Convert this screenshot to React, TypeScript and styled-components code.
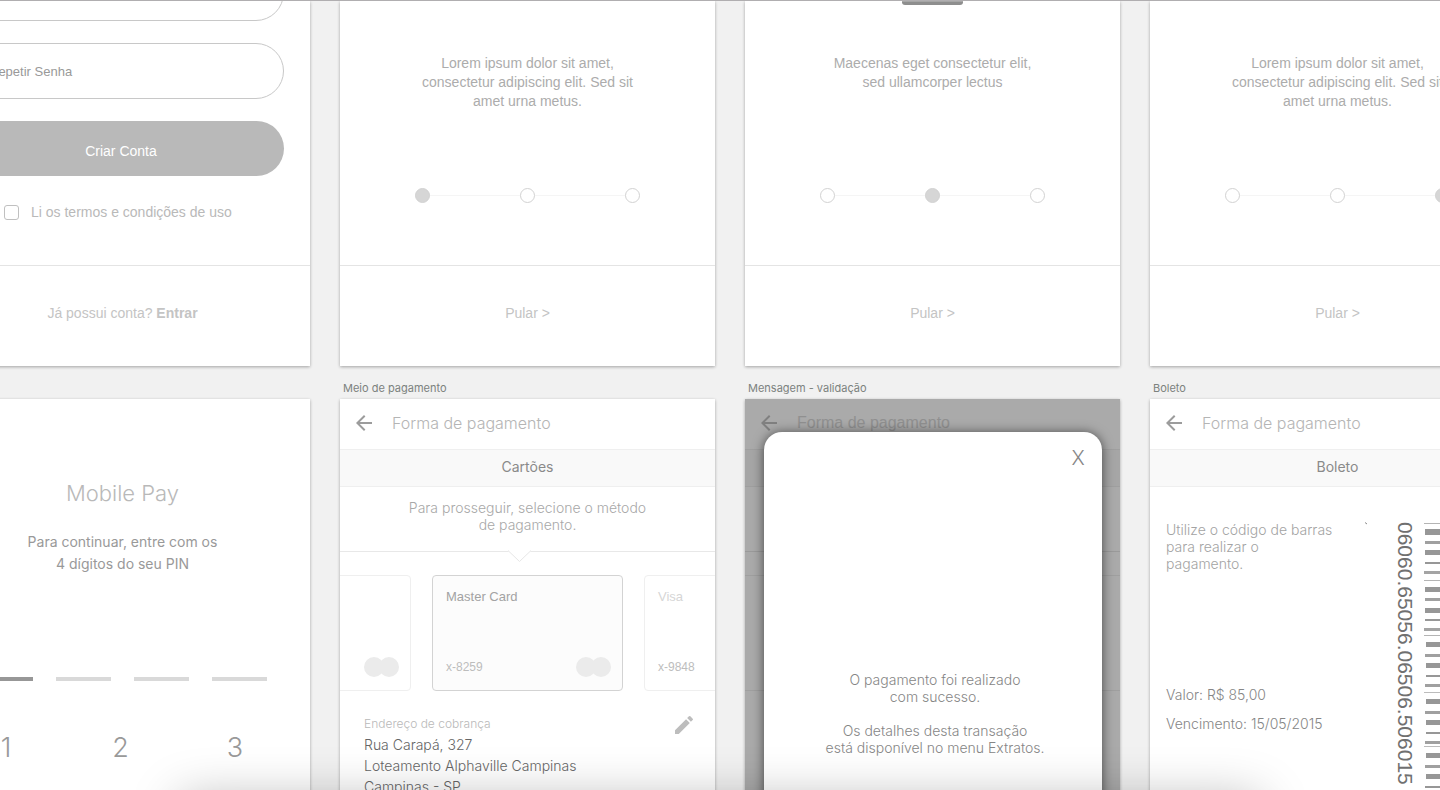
import React from "react";
import styled, { createGlobalStyle } from "styled-components";
import { MdArrowBack, MdEdit } from "react-icons/md";

const helvetica = `"Helvetica Neue", "Liberation Sans", Arial, sans-serif`;
const system = `Inter, "Liberation Sans", sans-serif`;

const GlobalStyle = createGlobalStyle`
  * { box-sizing: border-box; margin: 0; padding: 0; }
  body { background: #f1f1f1; overflow: hidden; font-family: ${system}; }
  button { border: 0; background: none; cursor: pointer; font-family: inherit; }
  a { color: inherit; text-decoration: none; }
  ol { list-style: none; }
`;

const Canvas = styled.main`
  height: 100vh;
  overflow: hidden;
  border-top: 1px solid #b0aeb0;
`;

const BoardRow = styled.div`
  display: flex;
  gap: 30px;
  margin-left: -65px;
  > * { flex: 0 0 375px; }
`;

const Artboard = styled.section<{ $height: number }>`
  position: relative;
  height: ${(p) => p.$height}px;
  overflow: hidden;
  background: #fff;
`;

const BoardSlot = styled.div`
  min-width: 0;
`;

const BoardFrame = styled.div`
  min-width: 0;
  box-shadow: 0 1px 3px rgba(0, 0, 0, 0.32);
`;

const BoardLabel = styled.h2`
  height: 33px;
  padding: 15px 3px 0;
  font: 400 11px/15px Inter, sans-serif;
  color: #7c827e;
`;

/* Sign-up and onboarding screens */

const TopScreen = styled.div`
  display: flex;
  flex-direction: column;
  height: 100%;
  font-family: ${helvetica};
`;

const SignUpForm = styled.form`
  flex: 1;
  display: flex;
  flex-direction: column;
  padding: 0 26px 0 23px;
  margin-top: -36px;
`;

const Field = styled.input`
  flex: none;
  height: 56px;
  margin-bottom: 22px;
  padding: 0 30px;
  border: 1px solid #c8c8c8;
  border-radius: 28px;
  outline: 0;
  background: #fff;
  font: 400 13px/20px ${helvetica};
  color: #999;
  &::placeholder { color: #999; opacity: 1; }
`;

const SubmitButton = styled.button`
  flex: none;
  height: 55px;
  padding-top: 4px;
  border-radius: 28px;
  background: #b9b9b9;
  color: #fff;
  font: 400 14px/20px ${helvetica};
`;

const Terms = styled.label`
  display: flex;
  align-items: center;
  gap: 12px;
  margin-top: 26px;
  padding-left: 46px;
  font-size: 14px;
  line-height: 20px;
  color: #b9b9b9;
`;

const CheckBox = styled.input`
  appearance: none;
  width: 15px;
  height: 15px;
  border: 1px solid #c0c0c0;
  border-radius: 3px;
  background: #fff;
`;

const ScreenFooter = styled.footer`
  display: flex;
  flex: 0 0 101px;
  align-items: center;
  justify-content: center;
  border-top: 1px solid #e4e4e4;
  padding-bottom: 6px;
  color: #c4c4c4;
  font-size: 14px;
  line-height: 20px;
  white-space: pre;
  button { font: inherit; color: inherit; }
`;

const Picture = styled.div`
  width: 61px;
  height: 4px;
  margin: 0 auto -4px;
  border-bottom: 3px solid #8e8e8e;
  border-radius: 0 0 3px 3px;
  background: #a6a6a6;
`;

const Intro = styled.p`
  height: 134px;
  padding-top: 53px;
  text-align: center;
  white-space: pre-line;
  font-size: 14px;
  line-height: 19px;
  color: #acacac;
`;

const Onboarding = styled.div`
  flex: 1;
`;

const Steps = styled.ol`
  display: flex;
  align-items: center;
  justify-content: space-between;
  width: 225px;
  margin: 53px auto 0;
  background: linear-gradient(#f5f5f5, #f5f5f5) center / 100% 1px no-repeat;
`;

const Step = styled.li<{ $active: boolean }>`
  width: 15px;
  height: 15px;
  border: 1px solid #d2d2d2;
  border-radius: 50%;
  background: ${(p) => (p.$active ? "#d6d6d6" : "#fff")};
`;

/* PIN screen */

const PinScreen = styled.div`
  padding-top: 79px;
  text-align: center;
`;

const Brand = styled.h1`
  font-weight: 300;
  font-size: 22px;
  line-height: 30px;
  color: #b9b9b9;
`;

const PinText = styled.p`
  margin-top: 23px;
  font-size: 14px;
  line-height: 22px;
  color: #999;
  white-space: pre-line;
`;

const PinSlots = styled.div`
  display: flex;
  justify-content: center;
  gap: 23px;
  margin-top: 102px;
`;

const PinSlot = styled.span<{ $filled?: boolean }>`
  width: 55px;
  height: 4px;
  background: ${(p) => (p.$filled ? "#979797" : "#d9d9d9")};
`;

const Keypad = styled.div`
  display: grid;
  grid-template-columns: repeat(3, 1fr);
  padding: 0 18px 0 14px;
  margin-top: 47px;
`;

const Key = styled.button`
  height: 40px;
  font: 300 27px/40px Inter, sans-serif;
  color: #999;
`;

/* Payment screens */

const AppBar = styled.header`
  display: flex;
  align-items: center;
  gap: 16px;
  height: 50px;
  padding: 0 0 2px 12px;
`;

const BackButton = styled.button<{ $pale?: boolean }>`
  width: 24px;
  height: 24px;
  color: ${(p) => (p.$pale ? "#c0c0c0" : "#9c9c9c")};
  svg { display: block; }
`;

const AppTitle = styled.span<{ $helvetica?: boolean }>`
  font-family: ${(p) => (p.$helvetica ? helvetica : system)};
  font-size: 16px;
  font-weight: 300;
  line-height: 24px;
  color: ${(p) => (p.$helvetica ? "#d8d8d8" : "#b5b5b5")};
`;

const SectionTitle = styled.h3`
  height: 38px;
  border: solid #efefef;
  border-width: 1px 0;
  background: #f9f9f9;
  text-align: center;
  font-weight: 400;
  font-size: 14px;
  line-height: 34px;
  color: #8a8a8a;
`;

const Prompt = styled.div`
  position: relative;
  height: 65px;
  padding: 12px 16px 0;
  border-bottom: 1px solid #e8e8e8;
  text-align: center;
  font-weight: 300;
  font-size: 14px;
  line-height: 17px;
  color: #a8a8a8;
  white-space: pre-line;
`;

const Notch = styled.svg`
  position: absolute;
  left: 168px;
  bottom: -12px;
`;

const CardStrip = styled.div`
  display: flex;
  gap: 21px;
  margin: 23px 0 0 -120px;
`;

const BankCard = styled.article<{ $selected?: boolean }>`
  display: flex;
  flex: 0 0 191px;
  flex-direction: column;
  justify-content: space-between;
  height: 116px;
  padding: 12px 10px 13px 13px;
  border: 1px solid ${(p) => (p.$selected ? "#d3d3d3" : "#efefef")};
  border-radius: 4px;
  background: ${(p) => (p.$selected ? "#fcfcfc" : "#fff")};
  color: ${(p) => (p.$selected ? "#a3a3a3" : "#d6d6d6")};
  font: 400 13px/18px ${helvetica};
`;

const CardBottom = styled.div`
  display: flex;
  align-items: center;
  justify-content: space-between;
  font-size: 12px;
  line-height: 20px;
  color: #bdbdbd;
`;

const Address = styled.address`
  display: flex;
  justify-content: space-between;
  padding: 22px 19px 0 24px;
  font-style: normal;
  font-weight: 300;
  font-size: 14px;
  line-height: 21px;
  color: #666;
`;

const AddressTitle = styled.h4`
  font-weight: 300;
  font-size: 12px;
  line-height: 21px;
  color: #b9b9b9;
`;

const EditButton = styled.button`
  width: 24px;
  height: 24px;
  color: #bdbdbd;
  svg { display: block; }
`;

const Backdrop = styled.div`
  position: absolute;
  inset: 0;
  background: rgba(0, 0, 0, 0.335);
`;

const Dialog = styled.div`
  position: absolute;
  top: 33px;
  left: 19px;
  right: 18px;
  bottom: 0;
  border-radius: 18px 18px 0 0;
  background: #fff;
  box-shadow: 0 1px 12px rgba(0, 0, 0, 0.6);
  text-align: center;
  font-weight: 300;
  font-size: 14px;
  line-height: 17px;
  color: #868686;
  white-space: pre-line;
  p { padding: 201px 0 0 4px; }
`;

const CloseButton = styled.button`
  display: block;
  margin-left: auto;
  width: 48px;
  height: 38px;
  padding-top: 14px;
  font-size: 20px;
  font-weight: 300;
  line-height: 24px;
  color: #868686;
`;

const Slip = styled.div`
  display: flex;
  padding: 35px 0 0 16px;
  font-weight: 300;
  font-size: 14px;
  line-height: 17px;
  color: #a3a3a3;
`;

const SlipInfo = styled.div`
  flex: none;
  width: 190px;
  margin-top: -1px;
  white-space: pre-line;
`;

const SlipData = styled.p`
  padding-top: 108px;
  line-height: 29px;
  color: #868686;
`;

const SlipCode = styled.div`
  display: flex;
  flex: 1;
  gap: 7px;
`;

const Digits = styled.span`
  writing-mode: vertical-rl;
  width: 24px;
  font: 400 21px/24px ${helvetica};
  color: #707070;
`;

const BottomShade = styled.div`
  position: fixed;
  left: 180px;
  right: 180px;
  top: calc(100% + 9px);
  height: 100px;
  box-shadow: 0 0 50px rgba(0, 0, 0, 0.28);
  pointer-events: none;
`;

const CardLogo = () => (
  <svg width="36" height="20" viewBox="0 0 36 20" fill="#ebebeb" aria-hidden="true">
    <circle cx="10" cy="10" r="10" />
    <circle cx="25" cy="10" r="10" />
  </svg>
);

const Tick = () => (
  <svg width="37" height="6" viewBox="0 0 37 6" aria-hidden="true">
    <path d="M9 .500L11 2" stroke="#8a8a8a" />
  </svg>
);

type Bar = [y: number, height: number, x: number, color: string];
const bars: Bar[] = [
  [1, 1, 0, "#b4b4b4"], [7, 6, 1, "#979797"], [19, 3, 1, "#a0a0a0"], [28, 5, 1, "#979797"],
  [40, 2, 1, "#979797"], [49, 3, 0, "#a4a4a4"], [58, 1, 0, "#b4b4b4"], [65, 5, 1, "#979797"],
  [76, 3, 1, "#a0a0a0"], [86, 5, 1, "#979797"], [97, 2, 1, "#979797"], [106, 3, 0, "#a4a4a4"],
  [113, 1, 0, "#b4b4b4"], [120, 5, 2, "#979797"], [132, 3, 1, "#a0a0a0"], [141, 5, 2, "#979797"],
  [153, 2, 2, "#979797"], [162, 3, 1, "#a0a0a0"], [170, 1, 0, "#bcbcbc"], [177, 5, 2, "#979797"],
  [189, 3, 1, "#a0a0a0"], [198, 5, 2, "#979797"], [210, 2, 2, "#979797"], [219, 3, 1, "#a0a0a0"],
  [224, 1, 0, "#bcbcbc"], [231, 5, 2, "#979797"], [243, 3, 1, "#a0a0a0"], [252, 5, 2, "#979797"],
  [264, 2, 1, "#979797"],
];

const Barcode = () => (
  <svg width="86" height="280" viewBox="0 0 86 280" aria-label="Código de barras">
    {bars.map(([y, h, x, color]) => (
      <rect key={y} x={x} y={y} width={86 - x} height={h} fill={color} />
    ))}
  </svg>
);

const Header = ({ alt }: { alt?: boolean }) => (
  <AppBar>
    <BackButton type="button" aria-label="Voltar" $pale={alt}><MdArrowBack size={24} /></BackButton>
    <AppTitle $helvetica={alt}>Forma de pagamento</AppTitle>
  </AppBar>
);

const Intros = [
  "Lorem ipsum dolor sit amet,\nconsectetur adipiscing elit. Sed sit\namet urna metus.",
  "Maecenas eget consectetur elit,\nsed ullamcorper lectus",
  "Lorem ipsum dolor sit amet,\nconsectetur adipiscing elit. Sed sit\namet urna metus.",
];

const IntroBoard = ({ index }: { index: number }) => (
  <BoardFrame>
    <Artboard $height={365}>
      <TopScreen>
        <Onboarding>
          {index === 1 && <Picture />}
          <Intro>{Intros[index]}</Intro>
          <Steps>
            {[0, 1, 2].map((n) => <Step key={n} $active={n === index} />)}
          </Steps>
        </Onboarding>
        <ScreenFooter><button type="button">{"Pular >"}</button></ScreenFooter>
      </TopScreen>
    </Artboard>
  </BoardFrame>
);

export default function App() {
  return (
    <Canvas>
      <GlobalStyle />
      <BoardRow>
        <BoardFrame>
          <Artboard $height={365}>
            <TopScreen>
              <SignUpForm onSubmit={(e) => e.preventDefault()}>
                <Field type="password" aria-label="Senha" />
                <Field type="password" aria-label="Repetir Senha" placeholder="Repetir Senha" />
                <SubmitButton type="submit">Criar Conta</SubmitButton>
                <Terms><CheckBox type="checkbox" />Li os termos e condições de uso</Terms>
              </SignUpForm>
              <ScreenFooter>Já possui conta? <a href="#entrar"><b>Entrar</b></a></ScreenFooter>
            </TopScreen>
          </Artboard>
        </BoardFrame>
        {[0, 1, 2].map((n) => <IntroBoard key={n} index={n} />)}
      </BoardRow>

      <BoardRow>
        <BoardSlot>
          <BoardLabel />
          <BoardFrame>
            <Artboard $height={667}>
              <PinScreen>
                <Brand>Mobile Pay</Brand>
                <PinText>{"Para continuar, entre com os\n4 dígitos do seu PIN"}</PinText>
                <PinSlots><PinSlot $filled /><PinSlot /><PinSlot /><PinSlot /></PinSlots>
                <Keypad>
                  <Key type="button">1</Key><Key type="button">2</Key><Key type="button">3</Key>
                </Keypad>
              </PinScreen>
            </Artboard>
          </BoardFrame>
        </BoardSlot>

        <BoardSlot>
          <BoardLabel>Meio de pagamento</BoardLabel>
          <BoardFrame>
            <Artboard $height={667}>
              <Header />
              <SectionTitle>Cartões</SectionTitle>
              <Prompt>
                {"Para prosseguir, selecione o método\nde pagamento."}
                <Notch width="23" height="13" viewBox="0 0 23 13" aria-hidden="true">
                  <path d="M0 0H23V1L11.500 12L0 1Z" fill="#fff" />
                  <path d="M0 .5L11.500 11.500L23 .5" fill="none" stroke="#e6e6e6" />
                </Notch>
              </Prompt>
              <CardStrip>
                <BankCard><span /><CardBottom><span /><CardLogo /></CardBottom></BankCard>
                <BankCard $selected>
                  Master Card<CardBottom><span>x-8259</span><CardLogo /></CardBottom>
                </BankCard>
                <BankCard>
                  Visa<CardBottom><span>x-9848</span><CardLogo /></CardBottom>
                </BankCard>
              </CardStrip>
              <Address>
                <div>
                  <AddressTitle>Endereço de cobrança</AddressTitle>
                  Rua Carapá, 327<br />Loteamento Alphaville Campinas<br />Campinas - SP
                </div>
                <EditButton type="button" aria-label="Editar"><MdEdit size={24} /></EditButton>
              </Address>
            </Artboard>
          </BoardFrame>
        </BoardSlot>

        <BoardSlot>
          <BoardLabel>Mensagem - validação</BoardLabel>
          <BoardFrame>
            <Artboard $height={667}>
              <Header alt />
              <SectionTitle />
              <Prompt />
              <CardStrip><BankCard /><BankCard /><BankCard /></CardStrip>
              <Backdrop />
              <Dialog role="dialog" aria-label="Mensagem">
                <CloseButton type="button">X</CloseButton>
                <p>{"O pagamento foi realizado\ncom sucesso.\n\nOs detalhes desta transação\nestá disponível no menu Extratos."}</p>
              </Dialog>
            </Artboard>
          </BoardFrame>
        </BoardSlot>

        <BoardSlot>
          <BoardLabel>Boleto</BoardLabel>
          <BoardFrame>
            <Artboard $height={667}>
              <Header />
              <SectionTitle>Boleto</SectionTitle>
              <Slip>
                <SlipInfo>
                  <p>{"Utilize o código de barras\npara realizar o\npagamento."}</p>
                  <SlipData>{"Valor: R$ 85,00\nVencimento: 15/05/2015"}</SlipData>
                </SlipInfo>
                <Tick />
                <SlipCode><Digits>06060.65056.06506.506015</Digits><Barcode /></SlipCode>
              </Slip>
            </Artboard>
          </BoardFrame>
        </BoardSlot>
      </BoardRow>
      <BottomShade />
    </Canvas>
  );
}
